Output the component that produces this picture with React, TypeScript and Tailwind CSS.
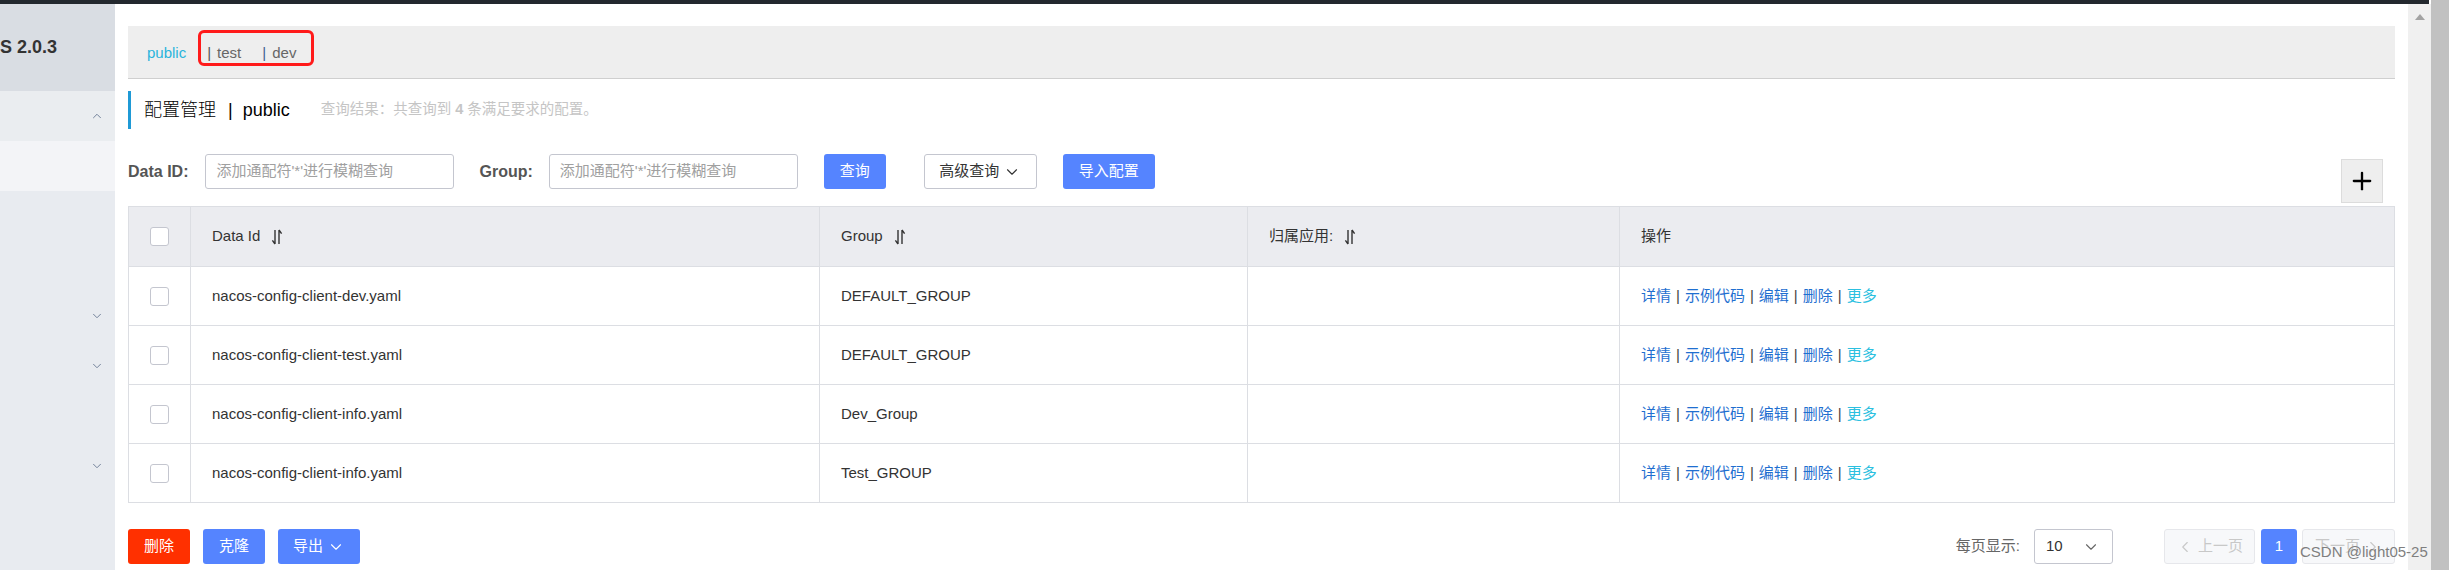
import { ChevronDown, ChevronUp, ChevronLeft, ChevronRight, Plus } from "lucide-react";

const rows = [
  { id: "nacos-config-client-dev.yaml", group: "DEFAULT_GROUP" },
  { id: "nacos-config-client-test.yaml", group: "DEFAULT_GROUP" },
  { id: "nacos-config-client-info.yaml", group: "Dev_Group" },
  { id: "nacos-config-client-info.yaml", group: "Test_GROUP" },
];

const SortIcon = () => (
  <svg width="14" height="16" viewBox="0 0 14 16" fill="none" stroke="#333" strokeWidth="1.4" className="ml-[10px]">
    <path d="M5 1v14M5 15L2.4 11.4M9 15V1M9 1l2.6 3.6" />
  </svg>
);

const Checkbox = () => (
  <div className="mx-auto w-[19px] h-[19px] rounded-[3px] border border-[#c4c6cf] bg-white" />
);

const Sidebar = () => (
  <div className="w-[115px] shrink-0 flex flex-col bg-[#e8ebf0]">
    <div className="h-[87px] bg-[#d9dde3] flex items-center">
      <span className="whitespace-nowrap text-[18px] font-bold text-[#333]">S 2.0.3</span>
    </div>
    <div className="h-[50px] bg-[#eaedf0] flex items-center justify-end pr-[11px]">
      <ChevronUp size={14} strokeWidth={1.7} color="#72829a" />
    </div>
    <div className="h-[50px] bg-[#f3f4f7]" />
    <div className="h-[100px]" />
    <div className="h-[50px] flex items-center justify-end pr-[11px]">
      <ChevronDown size={14} strokeWidth={1.7} color="#72829a" />
    </div>
    <div className="h-[50px] flex items-center justify-end pr-[11px]">
      <ChevronDown size={14} strokeWidth={1.7} color="#72829a" />
    </div>
    <div className="h-[50px]" />
    <div className="h-[50px] flex items-center justify-end pr-[11px]">
      <ChevronDown size={14} strokeWidth={1.7} color="#72829a" />
    </div>
  </div>
);

const Actions = () => (
  <div className="flex items-center text-[15px] text-[#1f6fd0]">
    <span>详情</span>
    <span className="mx-[5px] text-[#444]">|</span>
    <span>示例代码</span>
    <span className="mx-[5px] text-[#444]">|</span>
    <span>编辑</span>
    <span className="mx-[5px] text-[#444]">|</span>
    <span>删除</span>
    <span className="mx-[5px] text-[#444]">|</span>
    <span className="text-[#2cc0e0]">更多</span>
  </div>
);

export default function App() {
  return (
    <div
      className="relative w-[2449px] h-[570px] overflow-hidden flex bg-white text-[#333]"
      style={{ fontFamily: '"Liberation Sans", "Noto Sans CJK SC", sans-serif' }}
    >
      <div className="w-[2431px] flex flex-col">
        <div className="h-[4px] w-[2429px] bg-[#23282e]" />
        <div className="flex flex-1">
          <Sidebar />
          <div className="w-[2293px] px-[13px] flex flex-col">
            {/* namespace bar */}
            <div className="relative mt-[22px] h-[53px] bg-[#eeeeee] border-b border-[#cfcfcf] flex items-center pl-[19px] pt-[2px] text-[15px]">
              <span className="text-[#2ab4dc]">public</span>
              <span className="ml-[21px] text-[#555]">|</span>
              <span className="ml-[6px] text-[#666]">test</span>
              <span className="ml-[21px] text-[#3d5f91]">|</span>
              <span className="ml-[6px] text-[#666]">dev</span>
              <div className="absolute left-[70px] top-[4px] w-[116px] h-[36px] border-[3px] border-[#ff1a1a] rounded-[6px]" />
            </div>

            {/* title */}
            <div className="mt-[12px] h-[38px] border-l-[3px] border-[#1f9ad6] pl-[13px] flex items-center">
              <span className="text-[18px] text-black font-light">配置管理</span>
              <span className="text-[18px] text-black ml-[12px]">|</span>
              <span className="text-[18px] text-black ml-[10px]">public</span>
              <span className="ml-[31px] text-[14.5px] text-[#c5c5c5]">
                查询结果：共查询到 <span className="font-semibold">4</span> 条满足要求的配置。
              </span>
            </div>

            {/* search row */}
            <div className="mt-[25px] flex items-start">
              <div className="flex items-center h-[35px]">
                <span className="text-[16px] font-bold text-[#555]">Data ID:</span>
                <div className="ml-[17px] w-[249px] h-[35px] border border-[#c4c6cf] rounded-[3px] flex items-center pl-[10px] text-[15px] text-[#a0a0a0]">
                  添加通配符'*'进行模糊查询
                </div>
                <span className="ml-[25px] text-[16px] font-bold text-[#555]">Group:</span>
                <div className="ml-[16px] w-[249px] h-[35px] border border-[#c4c6cf] rounded-[3px] flex items-center pl-[10px] text-[15px] text-[#a0a0a0]">
                  添加通配符'*'进行模糊查询
                </div>
                <button className="ml-[26px] w-[62px] h-[35px] rounded-[3px] bg-[#5584ff] text-white text-[15px]">查询</button>
                <button className="ml-[38px] w-[113px] h-[35px] rounded-[3px] border border-[#c4c6cf] bg-white text-[#333] text-[15px] flex items-center justify-center gap-[4px]">
                  高级查询
                  <ChevronDown size={18} strokeWidth={1.5} />
                </button>
                <button className="ml-[26px] w-[92px] h-[35px] rounded-[3px] bg-[#5584ff] text-white text-[15px]">导入配置</button>
              </div>
              <div className="ml-auto mr-[12px] mt-[5px] w-[42px] h-[44px] bg-[#eeeeee] border border-[#dcdcdc] flex items-center justify-center">
                <Plus size={28} strokeWidth={2} color="#000" />
              </div>
            </div>

            {/* table */}
            <table className="mt-[3px] w-[2267px] table-fixed border-collapse text-[15px]">
              <colgroup>
                <col className="w-[62px]" />
                <col className="w-[629px]" />
                <col className="w-[428px]" />
                <col className="w-[372px]" />
                <col />
              </colgroup>
              <thead>
                <tr className="h-[60px] bg-[#ebecf0]">
                  <th className="border border-[#dcdee3] font-normal"><Checkbox /></th>
                  <th className="border border-[#dcdee3] font-normal text-left pl-[21px]">
                    <div className="flex items-center">Data Id<SortIcon /></div>
                  </th>
                  <th className="border border-[#dcdee3] font-normal text-left pl-[21px]">
                    <div className="flex items-center">Group<SortIcon /></div>
                  </th>
                  <th className="border border-[#dcdee3] font-normal text-left pl-[21px]">
                    <div className="flex items-center">归属应用:<SortIcon /></div>
                  </th>
                  <th className="border border-[#dcdee3] font-normal text-left pl-[21px]">操作</th>
                </tr>
              </thead>
              <tbody>
                {rows.map((r, i) => (
                  <tr key={i} className="h-[59px]">
                    <td className="border border-[#dcdee3]"><Checkbox /></td>
                    <td className="border border-[#dcdee3] pl-[21px]">{r.id}</td>
                    <td className="border border-[#dcdee3] pl-[21px]">{r.group}</td>
                    <td className="border border-[#dcdee3]" />
                    <td className="border border-[#dcdee3] pl-[21px]"><Actions /></td>
                  </tr>
                ))}
              </tbody>
            </table>

            {/* bottom bar */}
            <div className="mt-[26px] flex items-center">
              <button className="w-[62px] h-[35px] rounded-[3px] bg-[#ff3000] text-white text-[15px]">删除</button>
              <button className="ml-[13px] w-[62px] h-[35px] rounded-[3px] bg-[#5584ff] text-white text-[15px]">克隆</button>
              <button className="ml-[13px] w-[82px] h-[35px] rounded-[3px] bg-[#5584ff] text-white text-[15px] flex items-center justify-center gap-[4px]">
                导出
                <ChevronDown size={18} strokeWidth={1.5} />
              </button>
              <div className="ml-auto flex items-center">
                <span className="text-[15px] text-[#666]">每页显示:</span>
                <div className="ml-[14px] w-[79px] h-[35px] border border-[#c4c6cf] rounded-[3px] flex items-center justify-between pl-[11px] pr-[12px] text-[15px] text-[#333]">
                  10
                  <ChevronDown size={18} strokeWidth={1.5} color="#666" />
                </div>
                <button className="ml-[51px] w-[91px] h-[35px] rounded-[3px] bg-[#f7f8fa] border border-[#e6e7eb] text-[#c8c8c8] text-[15px] flex items-center justify-center gap-[4px]">
                  <ChevronLeft size={18} strokeWidth={1.5} />
                  上一页
                </button>
                <button className="ml-[6px] w-[36px] h-[35px] rounded-[3px] bg-[#5584ff] text-white text-[15px]">1</button>
                <button className="ml-[5px] w-[93px] h-[35px] rounded-[3px] bg-[#f7f8fa] border border-[#e6e7eb] text-[#c8c8c8] text-[15px] flex items-center justify-center gap-[4px]">
                  下一页
                  <ChevronRight size={18} strokeWidth={1.5} />
                </button>
              </div>
            </div>
          </div>
          {/* inner scroll track */}
          <div className="w-[23px] bg-[#f0f0f0] flex justify-center pt-[10px]">
            <svg width="10" height="6" viewBox="0 0 10 6">
              <path d="M5 0L10 6H0z" fill="#a3a3a3" />
            </svg>
          </div>
        </div>
      </div>
      <div className="w-[18px] bg-[#c1c1c1]" />

      <span className="absolute left-[2300px] top-[541px] text-[15px] text-[#7f7f7f] whitespace-nowrap">CSDN @light05-25</span>
    </div>
  );
}
